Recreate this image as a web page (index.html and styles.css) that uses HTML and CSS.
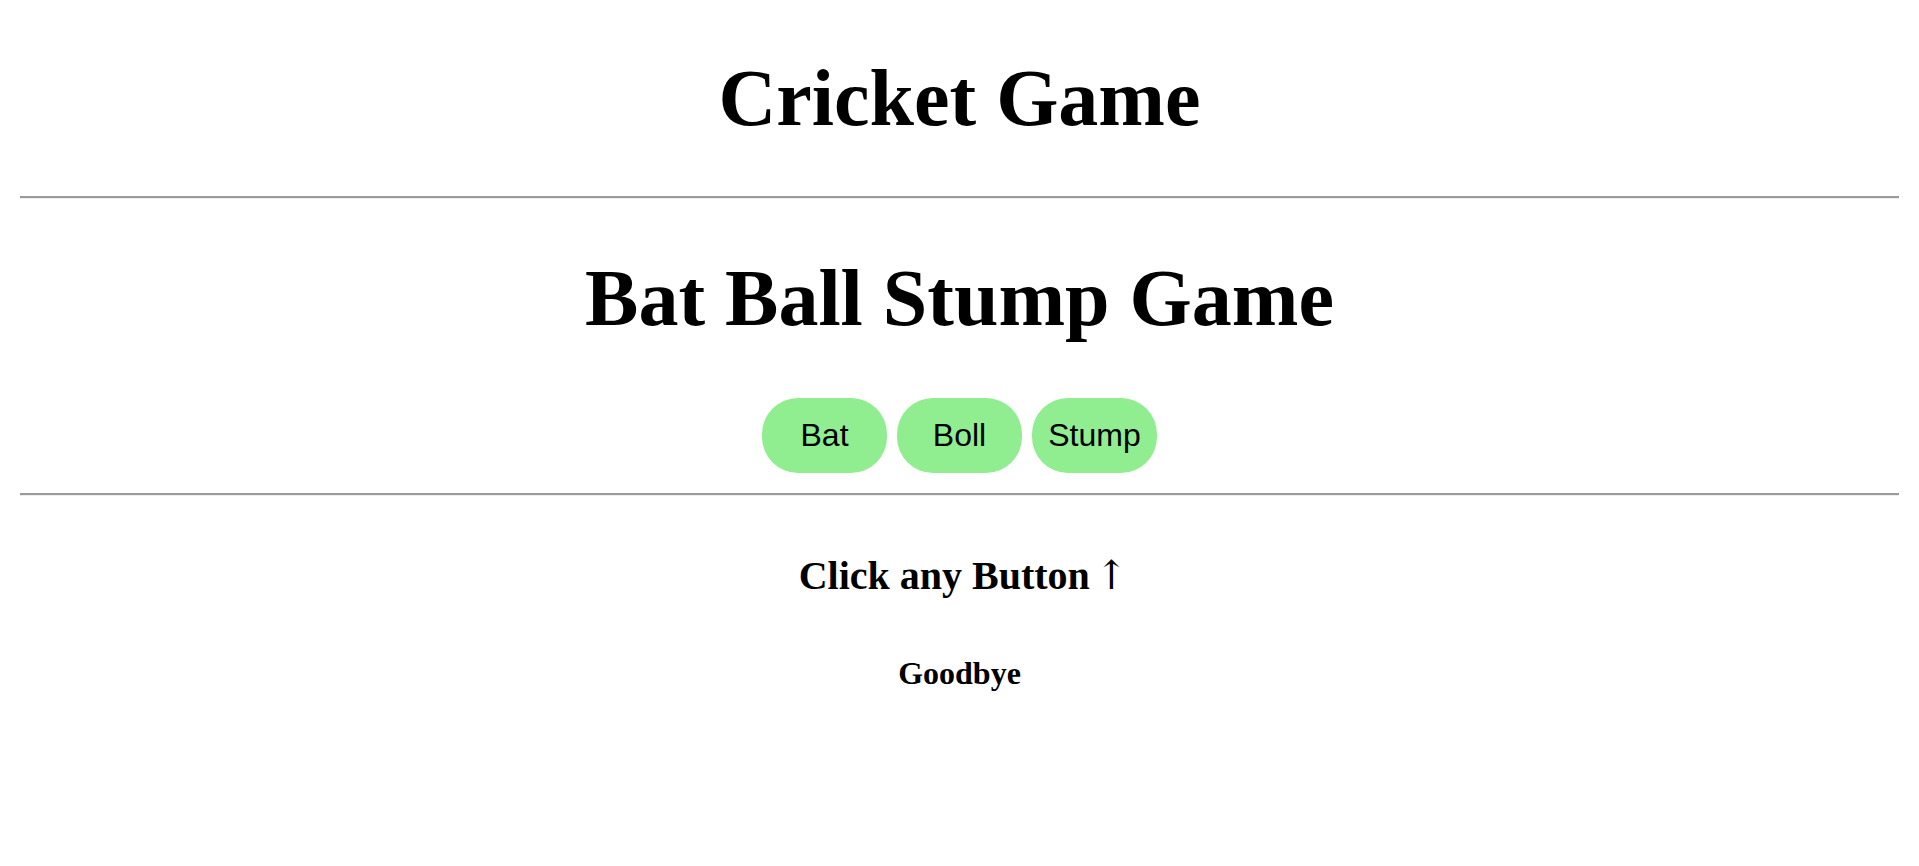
FILE: index.html
```html
<!DOCTYPE html>
<html lang="en">
<head>
<meta charset="utf-8">
<title>Cricket Game</title>
<link rel="stylesheet" href="styles.css">
</head>
<body>
<h1 class="title">Cricket Game</h1>
<hr class="rule">
<h1 class="subtitle">Bat Ball Stump Game</h1>
<div class="choices">
  <button class="choice">Bat</button>
  <button class="choice">Boll</button>
  <button class="choice">Stump</button>
</div>
<hr class="rule">
<h2 class="result">Click any <span class="tight">Button </span><span class="arrow">↑</span></h2>
<h3 class="bye">Goodbye</h3>
</body>
</html>
```
FILE: styles.css
```css
html, body {
  background: #ffffff;
}
body {
  margin: 0 20px;
  font-family: "Liberation Serif", "Times New Roman", serif;
  color: #000000;
  text-align: center;
}
.title {
  font-size: 80px;
  font-weight: bold;
  line-height: 88px;
  margin: 54px 0 54px;
}
.rule {
  margin: 0;
  height: 0;
  border: 0;
  border-top: 2px solid #9a9a9a;
  border-bottom: 1px solid #eeeeee;
}
.subtitle {
  font-size: 80px;
  font-weight: bold;
  line-height: 88px;
  margin: 55px 0 0;
}
.choices {
  display: flex;
  justify-content: center;
  gap: 10px;
  padding: 56px 0 20px;
}
.choice {
  width: 125px;
  height: 75px;
  border: none;
  border-radius: 36px;
  background: #90ee90;
  color: #000000;
  font-family: "Liberation Sans", Arial, sans-serif;
  font-size: 32px;
  padding: 0;
  cursor: pointer;
}
.result {
  font-size: 40px;
  font-weight: bold;
  line-height: 44px;
  margin: 57px 0 0;
}
.tight {
  word-spacing: -5px;
}
.arrow {
  font-weight: normal;
  font-family: "DejaVu Serif", serif;
  margin-right: -8px;
}
.bye {
  font-size: 32px;
  font-weight: bold;
  line-height: 36px;
  margin: 57px 0 0;
}
```
